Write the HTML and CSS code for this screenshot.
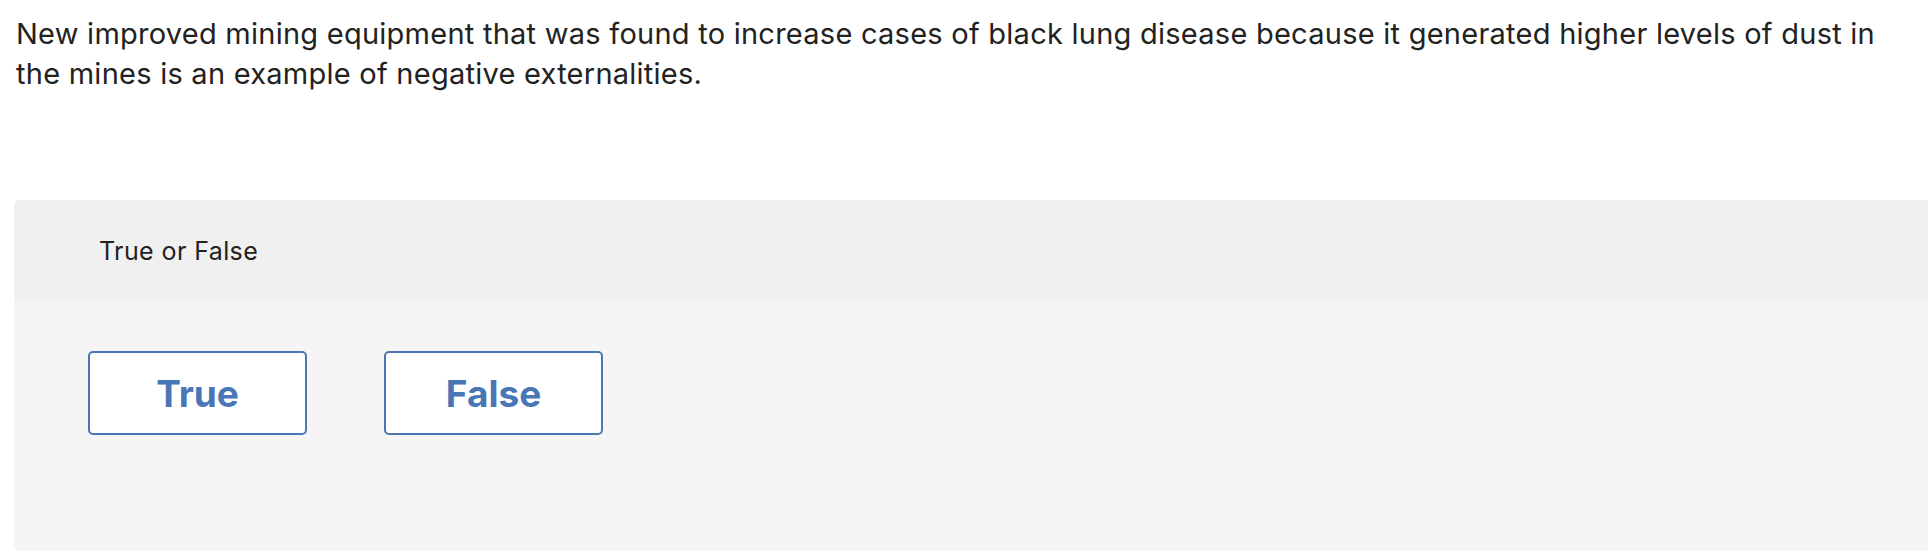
FILE: index.html
```html
<!DOCTYPE html>
<html lang="en">
<head>
<meta charset="utf-8">
<title>True or False</title>
<link rel="stylesheet" href="styles.css">
</head>
<body>
<div class="page">
  <p class="question">New improved mining equipment that was found to increase cases of black lung disease because it generated higher levels of dust in the mines is an example of negative externalities.</p>
  <section class="answer-box">
    <div class="answer-head">True or False</div>
    <div class="answer-body">
      <button class="choice" type="button">True</button>
      <button class="choice" type="button">False</button>
    </div>
  </section>
</div>
</body>
</html>
```

FILE: styles.css
```css
html, body {
  margin: 0;
  padding: 0;
  background: #ffffff;
  overflow: hidden;
}

.page {
  font-family: Inter, Lato, Arial, sans-serif;
  color: #222222;
  width: 1928px;
}

.question {
  margin: 0;
  padding: 14px 20px 0 16px;
  font-size: 29px;
  letter-spacing: 0.25px;
  line-height: 40px;
  width: 1910px;
  box-sizing: border-box;
  font-variant-ligatures: none;
}

.answer-box {
  margin: 106px -20px 0 14px;
  border-radius: 6px;
  overflow: hidden;
  height: 351px;
  background: #f5f5f5;
}

.answer-head {
  height: 100px;
  box-sizing: border-box;
  padding: 36px 0 0 85px;
  background: #f0f0f0;
  font-size: 25px;
  letter-spacing: 0.4px;
  line-height: 30px;
  color: #222222;
}

.answer-body {
  display: flex;
  gap: 77px;
  padding: 51px 0 0 74px;
}

.choice {
  width: 219px;
  height: 84px;
  box-sizing: border-box;
  border: 2px solid #4a76b4;
  border-radius: 5px;
  background: #ffffff;
  color: #4876b6;
  font-family: Inter, Lato, Arial, sans-serif;
  font-weight: 700;
  font-size: 37px;
  padding: 0;
  cursor: pointer;
}
```
